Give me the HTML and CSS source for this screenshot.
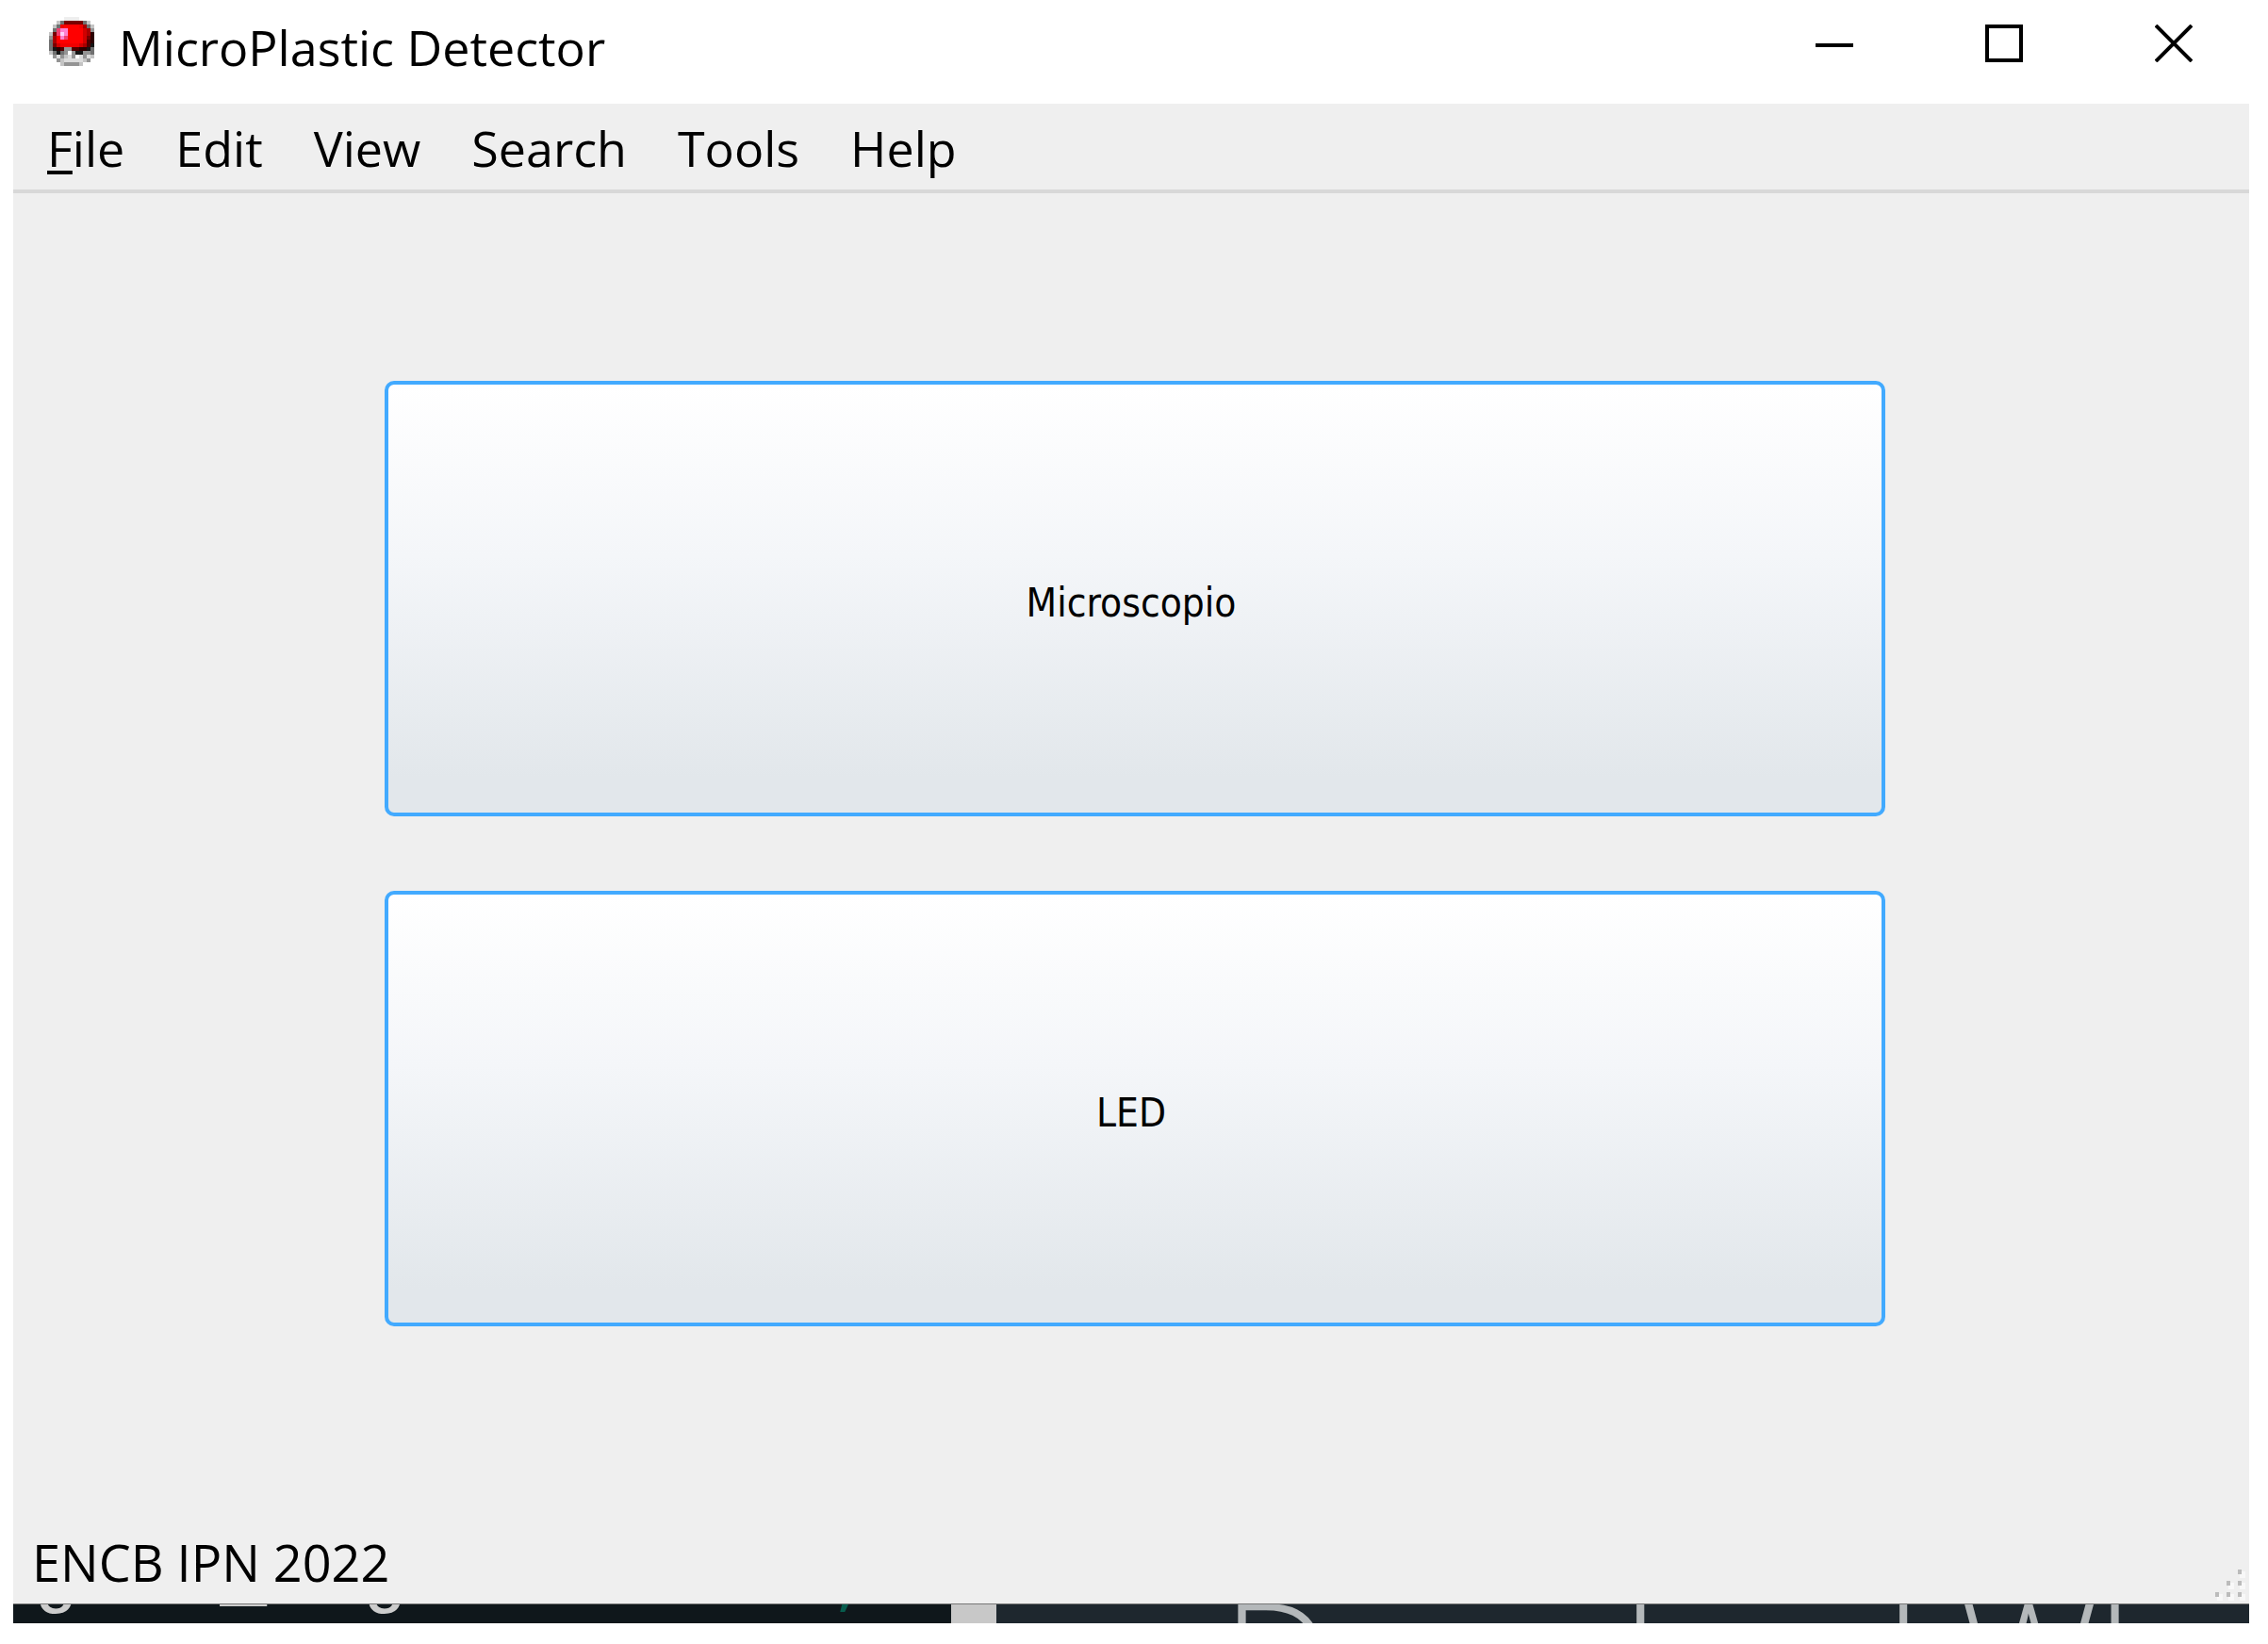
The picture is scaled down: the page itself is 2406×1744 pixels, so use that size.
FILE: index.html
```
<!DOCTYPE html>
<html lang="es">
<head>
<meta charset="utf-8">
<title>MicroPlastic Detector</title>
<link rel="stylesheet" href="styles.css">
</head>
<body>
<div class="window">
  <header class="titlebar">
    <svg class="app-icon" viewBox="0 0 12 13" preserveAspectRatio="none" shape-rendering="crispEdges" aria-hidden="true">
      <path fill="#eeeeee" d="M4 0h4v1h-4z"/>
      <path fill="#f00000" d="M3 2h6v1h-6zM2 3h8v5h-8z"/>
      <path fill="#ff0000" d="M4 2h4v1h-4zM5 3h4v4h-4zM2 5h4v2h-4z"/>
      <path fill="#780000" d="M4 1h5v1h-5zM1 4h1v1h-1zM1 7h1v1h-1zM10 5h1v1h-1z"/>
      <path fill="#a80000" d="M9 2h1v1h-1zM10 3h1v2h-1zM1 5h1v2h-1zM9 7h1v1h-1z"/>
      <path fill="#d00000" d="M9 3h1v4h-1zM2 7h1v1h-1zM8 7h1v1h-1z"/>
      <path fill="#500000" d="M10 6h1v2h-1zM3 8h1v1h-1zM6 8h2v1h-2z"/>
      <path fill="#2c0000" d="M11 4h1v3h-1zM2 8h1v1h-1zM8 8h2v1h-2z"/>
      <path fill="#f04070" d="M2 3h1v2h-1zM4 5h1v1h-1z"/>
      <path fill="#ff80d0" d="M3 3h2v1h-2zM4 4h1v1h-1zM3 5h1v1h-1z"/>
      <path fill="#ffd0ff" d="M3 4h1v1h-1z"/>
      <path fill="#151515" d="M11 7h1v1h-1zM1 8h1v1h-1zM10 8h1v1h-1zM2 9h1v1h-1zM7 9h2v1h-2z"/>
      <path fill="#707070" d="M3 1h1v1h-1zM9 1h1v1h-1zM2 2h1v1h-1zM10 2h1v1h-1zM1 3h1v1h-1zM0 6h1v3h-1zM11 8h1v2h-1zM1 9h1v1h-1zM3 9h1v1h-1z"/>
      <path fill="#949494" d="M11 3h1v1h-1zM0 5h1v1h-1zM4 8h2v1h-2zM4 9h1v1h-1zM6 9h1v2h-1zM9 9h2v1h-2zM1 10h1v1h-1zM3 10h1v1h-1zM9 10h1v1h-1zM2 11h1v1h-1zM10 11h1v1h-1zM4 12h4v1h-4z"/>
      <path fill="#c4c4c4" d="M2 1h1v1h-1zM10 1h1v1h-1zM1 2h1v1h-1zM11 2h1v1h-1zM0 4h1v1h-1zM0 9h1v1h-1zM4 10h1v1h-1zM11 10h1v1h-1zM3 11h1v1h-1zM9 11h1v1h-1zM3 12h1v1h-1zM8 12h1v1h-1z"/>
      <path fill="#dcdcdc" d="M2 10h1v1h-1zM5 10h1v1h-1zM8 10h1v1h-1zM10 10h1v1h-1zM4 11h5v1h-5z"/>
    </svg>
    <h1 class="title">MicroPlastic Detector</h1>
    <div class="controls">
      <button type="button" class="control" aria-label="Minimize">
        <svg class="glyph" viewBox="0 0 40 40"><path d="M0 20h40v4H0z"/></svg>
      </button>
      <button type="button" class="control" aria-label="Maximize">
        <svg class="glyph" viewBox="0 0 40 40"><path fill-rule="evenodd" d="M0 0h40v40H0zM4 4v32h32V4z"/></svg>
      </button>
      <button type="button" class="control" aria-label="Close">
        <svg class="glyph" viewBox="0 0 40 40"><path fill="none" stroke="#000" stroke-width="4" d="M1 1L39 39M39 1L1 39"/></svg>
      </button>
    </div>
  </header>
  <nav class="menubar">
    <button type="button" class="menu"><span class="mnemonic">F</span>ile</button>
    <button type="button" class="menu">Edit</button>
    <button type="button" class="menu">View</button>
    <button type="button" class="menu">Search</button>
    <button type="button" class="menu">Tools</button>
    <button type="button" class="menu">Help</button>
  </nav>
  <main class="content">
    <button type="button" class="action">Microscopio</button>
    <button type="button" class="action">LED</button>
  </main>
  <footer class="statusbar">
    <span class="status">ENCB IPN 2022</span>
    <svg class="grip" viewBox="0 0 32 36" shape-rendering="crispEdges" aria-hidden="true">
      <path fill="#f8f8f8" d="M26 2h6v7h-6zM14 14h6v7h-6zM26 14h6v7h-6zM2 26h6v7h-6zM14 26h6v7h-6zM26 26h6v7h-6z"/>
      <path fill="#bbbbbb" d="M24 0h4v5h-4zM12 12h4v5h-4zM24 12h4v5h-4zM0 24h4v5h-4zM12 24h4v5h-4zM24 24h4v5h-4z"/>
    </svg>
  </footer>
</div>
<div class="backdrop" aria-hidden="true">
  <div class="editor"><div class="code">g   _  g         <span class="string">,</span></div></div>
  <div class="divider"></div>
  <div class="page"><div class="heading">Download Wh</div></div>
</div>
</body>
</html>
```
FILE: styles.css
```
* {
  box-sizing: border-box;
}

body {
  margin: 0;
  padding: 0 20px 0 14px;
  background: #fff;
  color: #000;
  font-family: "Open Sans", "Noto Sans", sans-serif;
  font-size: 52px;
  line-height: 72px;
}

button {
  margin: 0;
  padding: 0;
  border: 0;
  background: none;
  color: inherit;
  font: inherit;
}

.titlebar {
  display: flex;
  align-items: flex-start;
  height: 110px;
  padding: 14px 0 0 38px;
}

.app-icon {
  width: 48px;
  height: 52px;
  margin-top: 4px;
}

.title {
  flex: 1;
  margin: 0 0 0 26px;
  font-size: 52px;
  font-weight: 400;
}

.controls {
  display: flex;
  gap: 20px;
}

.control {
  display: flex;
  justify-content: center;
  width: 160px;
  padding-top: 12px;
}

.glyph {
  width: 40px;
  height: 40px;
}

.menubar {
  display: flex;
  gap: 54px;
  height: 95px;
  padding: 11px 36px 0;
  border-bottom: 4px solid #d8d8d8;
  background: #efefef;
}

.menu {
  height: 72px;
}

.mnemonic {
  text-decoration: underline;
  text-decoration-thickness: 4px;
  text-underline-offset: 4px;
  text-decoration-skip-ink: none;
}

.content {
  display: flex;
  flex-direction: column;
  gap: 79px;
  padding: 199px 386px 199px 394px;
  background: #efefef;
}

.action {
  height: 462px;
  padding: 10px 8px 0 0;
  border: 4px solid #42aaff;
  border-radius: 10px;
  background: linear-gradient(#fff, #f4f6f9 40%, #e2e7eb 92%, #e2e7eb);
  font-family: "DejaVu Sans Condensed", "DejaVu Sans", sans-serif;
  font-size: 42px;
}

.statusbar {
  display: flex;
  justify-content: space-between;
  align-items: flex-end;
  height: 95px;
  padding: 0 4px 0 20px;
  background: #efefef;
}

.status {
  padding-bottom: 8px;
  font-size: 54px;
}

.grip {
  width: 32px;
  height: 36px;
}

.backdrop {
  display: flex;
  height: 21px;
  border-top: 1px solid #777;
  overflow: hidden;
}

.editor {
  flex: 995 1 0;
  background: #0f171b;
  color: #ccc;
  overflow: hidden;
}

.code {
  margin: -74px 0 0 20px;
  font-family: "Liberation Mono", monospace;
  font-size: 83px;
  line-height: 90px;
  white-space: pre;
}

.string {
  color: #075c4d;
}

.divider {
  flex: 48 1 0;
  background: #c8c8c8;
}

.page {
  flex: 1329 1 0;
  background: #1e272e;
  color: #b4b8ba;
  overflow: hidden;
}

.heading {
  margin: -48px 0 0 240px;
  font-size: 163px;
  font-weight: 300;
  line-height: 200px;
  white-space: nowrap;
}
```
